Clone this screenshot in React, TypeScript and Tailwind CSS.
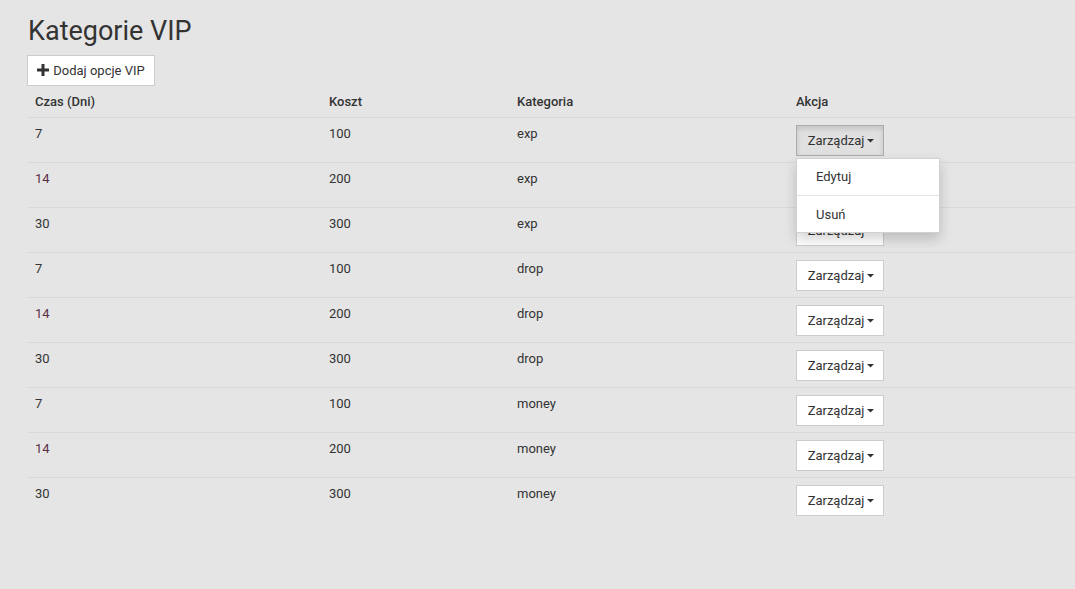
import React from "react";

const rows = [
  { d: "7", c: "100", k: "exp" },
  { d: "14", c: "200", k: "exp" },
  { d: "30", c: "300", k: "exp" },
  { d: "7", c: "100", k: "drop" },
  { d: "14", c: "200", k: "drop" },
  { d: "30", c: "300", k: "drop" },
  { d: "7", c: "100", k: "money" },
  { d: "14", c: "200", k: "money" },
  { d: "30", c: "300", k: "money" },
];

function Caret() {
  return (
    <svg width="7" height="4" viewBox="0 0 7 4" className="ml-[3px] mt-[1px]">
      <path d="M0 0 L7 0 L3.5 3.5 Z" fill="#333" />
    </svg>
  );
}

export default function App() {
  return (
    <div
      className="w-[1075px] h-[589px] overflow-hidden bg-[#e5e5e5] text-[#333] pl-[27px]"
      style={{ fontFamily: "Roboto, 'Noto Sans', sans-serif" }}
    >
      <h1 className="text-[27px] leading-[30px] pt-[16px] pl-[1px] text-[#333] font-normal">Kategorie VIP</h1>
      <button className="mt-[9px] h-[31px] w-[128px] bg-white border border-[#ccc] flex items-center justify-center text-[13px] text-[#333]">
        <svg width="12" height="12" viewBox="0 0 12 12" className="mr-[4px] mb-[1px]">
          <path d="M4.5 0 H7.5 V4.5 H12 V7.5 H7.5 V12 H4.5 V7.5 H0 V4.5 H4.5 Z" fill="#333" />
        </svg>
        Dodaj opcje VIP
      </button>
      <div className="w-[1048px] text-[13px] mt-[1px]">
        <div className="flex h-[31px] border-b border-[#d9d9d9] font-medium items-start pt-[5px]">
          <div className="w-[294px] pl-[8px]">Czas (Dni)</div>
          <div className="w-[188px] pl-[8px]">Koszt</div>
          <div className="w-[279px] pl-[8px]">Kategoria</div>
          <div className="flex-1 pl-[8px]">Akcja</div>
        </div>
        {rows.map((r, i) => (
          <div
            key={i}
            className={`flex h-[45px] items-start ${i < rows.length - 1 ? "border-b border-[#d9d9d9]" : ""}`}
          >
            <div className={`w-[294px] pl-[8px] pt-[6px] ${r.d === "14" ? "text-[#5c2e46]" : ""}`}>{r.d}</div>
            <div className="w-[188px] pl-[8px] pt-[6px]">{r.c}</div>
            <div className="w-[279px] pl-[8px] pt-[6px]">{r.k}</div>
            <div className="flex-1 pl-[8px] pt-[7px] relative">
              <button
                className={`h-[31px] w-[88px] border flex items-center justify-center pl-[2px] text-[13px] text-[#333] ${
                  i === 0
                    ? "bg-[#e0e0e0] border-[#adadad] shadow-[inset_0_3px_5px_rgba(0,0,0,0.125)]"
                    : "bg-white border-[#ccc]"
                }`}
              >
                Zarządzaj
                <Caret />
              </button>
              {i === 0 && (
                <div className="absolute left-[8px] top-[40px] z-10 w-[144px] bg-white border border-[#d0d0d0] shadow-[0_6px_12px_rgba(0,0,0,0.175)] py-[5px]">
                  <div className="h-[26px] pl-[19px] flex items-center">Edytuj</div>
                  <div className="h-px bg-[#e5e5e5] my-[5px]" />
                  <div className="h-[26px] pl-[19px] pt-[2px] flex items-center">Usuń</div>
                </div>
              )}
            </div>
          </div>
        ))}
      </div>
    </div>
  );
}
